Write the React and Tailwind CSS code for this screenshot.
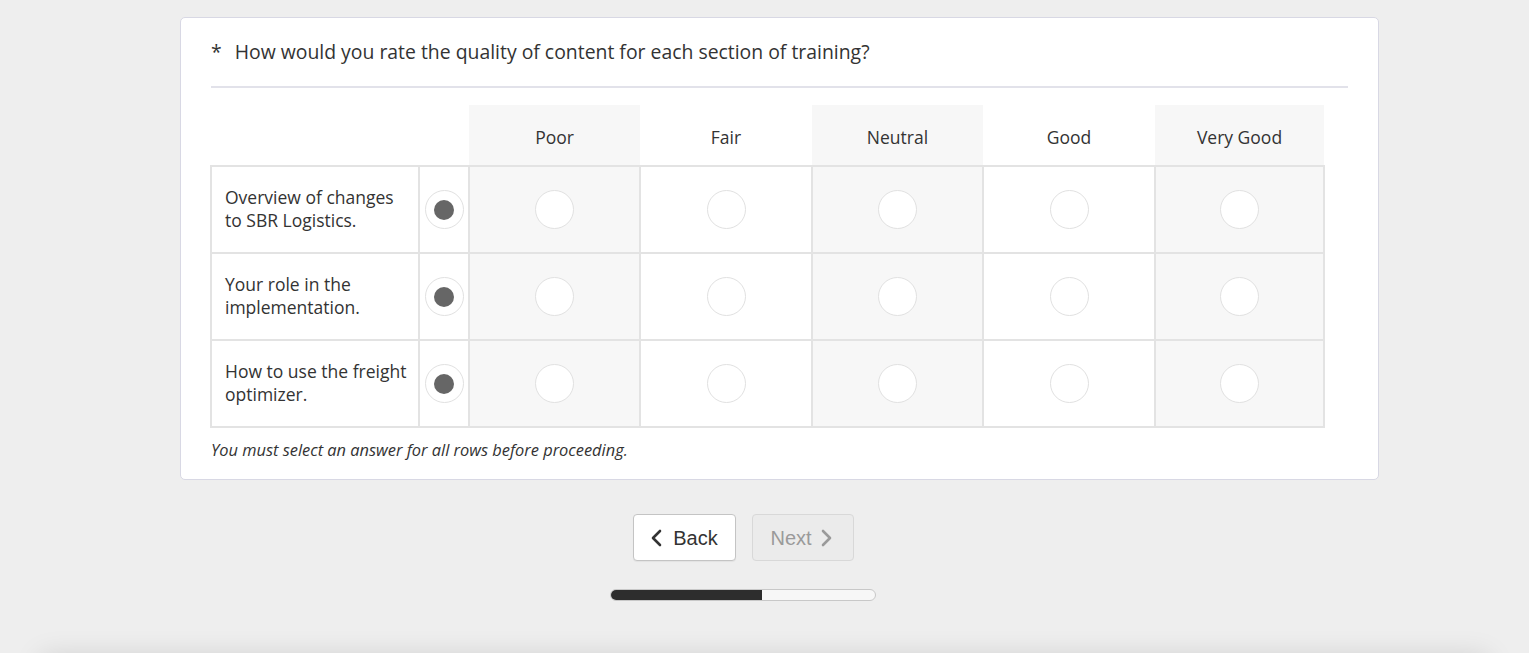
import React from "react";

const columns = ["Poor", "Fair", "Neutral", "Good", "Very Good"];
const colWidths = ["w-[171px]", "w-[172px]", "w-[171px]", "w-[172px]", "w-[169px]"];
const shaded = [true, false, true, false, true];

const rows = [
  "Overview of changes to SBR Logistics.",
  "Your role in the implementation.",
  "How to use the freight optimizer.",
];

const Radio = ({ checked }) => (
  <span className="mx-auto flex h-[39px] w-[39px] items-center justify-center rounded-full border-[1.5px] border-[#e1e1e1] bg-white">
    {checked && <span className="h-[20px] w-[20px] rounded-full bg-[#666]" />}
  </span>
);

const App = () => {
  return (
    <div className="min-h-[700px] bg-[#eeeeee] pt-[17px] font-['Open_Sans',sans-serif] text-[#333]">
      <div className="ml-[180px] w-[1199px] rounded-[5px] border border-[#d8d8e4] bg-white pb-[18px] pl-[29px] pr-[30px]">
        <div className="ml-[1px] flex gap-[13px] border-b-2 border-[#e2e2ea] pb-[20px] pt-[20px] text-[19.4px] leading-[28px]">
          <span>*</span>
          <span>How would you rate the quality of content for each section of training?</span>
        </div>

        <table className="mt-[17px] w-[1113px] table-fixed border-collapse">
          <thead>
            <tr className="h-[61px]">
              <th className="w-[208px]" />
              <th className="w-[50px]" />
              {columns.map((c, i) => (
                <th
                  key={c}
                  className={`${colWidths[i]} pt-[4px] text-center text-[17.5px] font-normal ${shaded[i] ? "bg-[#f7f7f7]" : "bg-white"}`}
                >
                  {c}
                </th>
              ))}
            </tr>
          </thead>
          <tbody>
            {rows.map((r) => (
              <tr key={r} className="h-[87px]">
                <td className="border-2 border-[#e3e3e3] pl-[13px] pr-[8px] pb-[2px] text-[17.5px] leading-[23px]">{r}</td>
                <td className="border-2 border-[#e3e3e3]">
                  <Radio checked />
                </td>
                {columns.map((c, i) => (
                  <td
                    key={c}
                    className={`border-2 border-[#e3e3e3] ${shaded[i] ? "bg-[#f7f7f7]" : "bg-white"}`}
                  >
                    <Radio />
                  </td>
                ))}
              </tr>
            ))}
          </tbody>
        </table>

        <p className="ml-[1px] mt-[11px] text-[16.4px] italic leading-[22px]">
          You must select an answer for all rows before proceeding.
        </p>
      </div>

      <div className="mt-[34px] flex justify-center gap-[16px] pr-[43px] font-['Liberation_Sans',Arial,sans-serif]">
        <button className="flex h-[47px] w-[103px] items-center justify-center gap-[11px] rounded-[4px] border border-[#c4c4c4] bg-white pl-[2px] pr-[2px] text-[20px] text-[#333] shadow-[0_1px_1px_rgba(0,0,0,0.05)]">
          <svg width="12" height="18" viewBox="0 0 12 18" fill="none">
            <path d="M10 2L3 9l7 7" stroke="#333" strokeWidth="2.6" strokeLinecap="round" strokeLinejoin="round" />
          </svg>
          Back
        </button>
        <button className="flex h-[47px] w-[102px] items-center justify-center gap-[9px] rounded-[4px] border border-[#d8d8d8] bg-[#ebebeb] pr-[2px] text-[20px] text-[#9a9a9a]">
          Next
          <svg width="12" height="18" viewBox="0 0 12 18" fill="none">
            <path d="M2 2l7 7-7 7" stroke="#9a9a9a" strokeWidth="2.6" strokeLinecap="round" strokeLinejoin="round" />
          </svg>
        </button>
      </div>

      <div className="mt-[28px] flex justify-center pr-[43px]">
        <div className="h-[12px] w-[266px] overflow-hidden rounded-full border border-[#c8c8c8] bg-[#f7f7f7]">
          <div className="h-full w-[151px] bg-[#2d2d2d]" />
        </div>
      </div>

      <div className="mx-[40px] mt-[55px] h-[60px] rounded-t-[6px] bg-[#eeeeee] shadow-[0_0_28px_rgba(0,0,0,0.13)]" />
    </div>
  );
};

export default App;
